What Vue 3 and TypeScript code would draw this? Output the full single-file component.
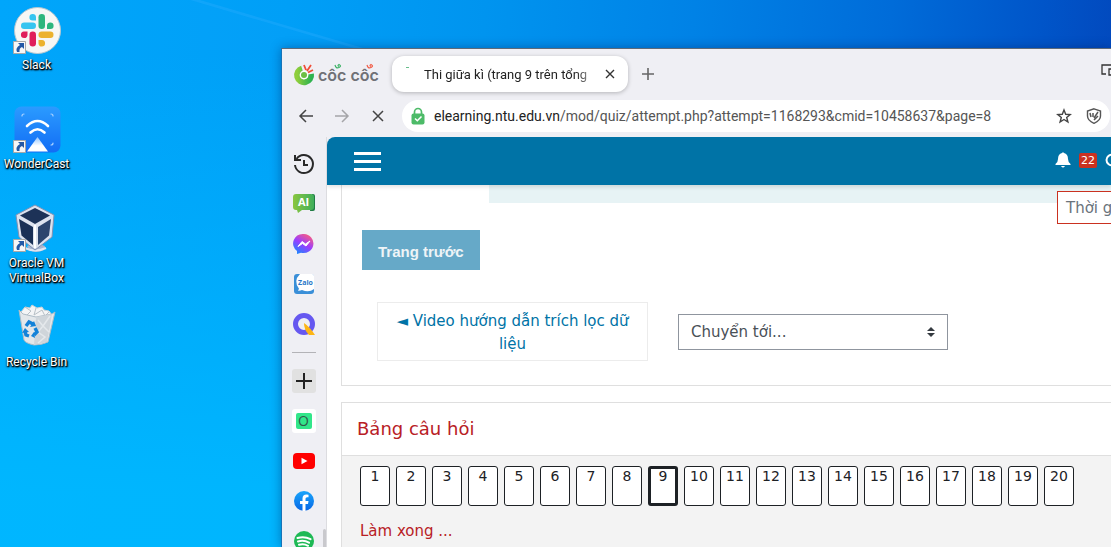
<script setup lang="ts">
import { ref } from 'vue'

interface Shortcut {
  id: string
  label: string
  linked: boolean
}

const shortcuts: Shortcut[] = [
  { id: 'slack', label: 'Slack', linked: true },
  { id: 'cast', label: 'WonderCast', linked: true },
  { id: 'vbox', label: 'Oracle VM VirtualBox', linked: true },
  { id: 'bin', label: 'Recycle Bin', linked: false },
]

const questions: number[] = Array.from({ length: 20 }, (_, i) => i + 1)
const current = ref(9)
const address = ref('/mod/quiz/attempt.php?attempt=1168293&cmid=10458637&page=8')
</script>

<template>
  <div class="desktop">
    <svg class="beam" viewBox="0 0 190 50" width="190" height="50" aria-hidden="true">
      <path d="M0 0h10L180 50h-10z" fill="#35b0ff" fill-opacity=".3" />
      <path d="M0 0 170 50H0z" fill="#35b0ff" fill-opacity=".06" />
    </svg>
    <ul class="shortcuts">
      <li v-for="s in shortcuts" :key="s.id" class="shortcut">
        <span class="picture">
          <svg v-if="s.id === 'slack'" viewBox="0 0 48 48" width="48" height="48" aria-hidden="true">
            <circle cx="24.500" cy="24.500" r="23" fill="#f7f7f5" stroke="#b9c7cf" />
            <g fill="#36c5f0"><rect x="8" y="16.500" width="15" height="6.500" rx="3.200" /><path d="M23 14.500h-3.500a3.300 3.300 0 1 1 3.500-3.500z" /></g>
            <g fill="#2eb67d"><rect x="25.500" y="8" width="6.500" height="15" rx="3.200" /><path d="M34 23V19.500a3.300 3.300 0 1 1 3.500 3.500z" /></g>
            <g fill="#ecb22e"><rect x="25.500" y="25.500" width="15" height="6.500" rx="3.200" /><path d="M25.500 34H29a3.300 3.300 0 1 1-3.500 3.500z" /></g>
            <g fill="#e01e5a"><rect x="16.500" y="25.500" width="6.500" height="15" rx="3.200" /><path d="M14.500 25.500V29A3.300 3.300 0 1 1 11 25.500z" /></g>
          </svg>
          <svg v-else-if="s.id === 'cast'" viewBox="0 0 48 48" width="48" height="48" aria-hidden="true">
            <defs>
              <linearGradient id="castBg" x1="0" y1="0" x2="0" y2="1"><stop offset="0" stop-color="#2b9bff" /><stop offset="1" stop-color="#126df5" /></linearGradient>
              <linearGradient id="castBeam" x1="0" y1="0" x2="0" y2="1"><stop offset="0" stop-color="#8fc4ff" /><stop offset=".6" stop-color="#fff" /></linearGradient>
            </defs>
            <rect x="1.500" y="1.500" width="46" height="46" rx="7" fill="url(#castBg)" />
            <g fill="none" stroke="#fff" stroke-linecap="round">
              <path d="M14 21q10.500-10 21 0M17.500 27.500q7-6.500 14 0" stroke-width="2.600" />
              <path d="M9 11q0-2 2-2M38 9q2 0 2 2M40 38q0 2-2 2" stroke="#a9d2ff" stroke-width="1.200" />
            </g>
            <path d="M24.500 32 35 46.500H14z" fill="url(#castBeam)" />
          </svg>
          <svg v-else-if="s.id === 'vbox'" viewBox="0 0 48 48" width="48" height="48" aria-hidden="true">
            <path d="M14 42q8-5 18 0l-1 4q-8 4-15 0z" fill="#a9b5ce" />
            <path d="M12 44q10 5 21 0" fill="none" stroke="#dfe5f1" stroke-width="2" />
            <path d="M22 1 41 11 39 33 22 46 6 33 3 11z" fill="#dde2ee" stroke="#8191b3" />
            <path d="M22 4 37 11.500 22 20 7 11.500z" fill="#1d3257" />
            <path d="M6 15 20 23V41L8.500 31.500z" fill="#1a2f55" />
            <path d="M38 15 25 23V41L36 31.500z" fill="#2c446d" />
            <path d="M22 21V44" stroke="#fff" stroke-width="2" />
          </svg>
          <svg v-else viewBox="0 0 48 48" width="48" height="48" aria-hidden="true">
            <path d="m8 9 4-5 5 1 2-3 5 3 5-1 2 3 5 1 3 4-3 6H11z" fill="#f4f5f6" stroke="#c9d0d5" />
            <path d="m12 4 6 4-4 4m9-7-2 7 8-5 3 6 4-4" fill="none" stroke="#b8c0c6" />
            <path d="M6 7 11 37q1 3 10 5 8 0 14-3l7-30-3 2-16 3-13-3z" fill="#e3e7ea" stroke="#aebcc6" />
            <path d="m23 14 16-3-5 28-13 3z" fill="#cfd5da" />
            <path d="m25 17 5 6-5 6 7 5-7 6m12-27-7 10 6 6" fill="none" stroke="#e4e8eb" stroke-width="1.500" />
            <g fill="none" stroke="#1382d8" stroke-width="3.400"><path d="m13 23 3-4 4 2M22 25l2 4-3 3M16 33l-3-1-1-4" /></g>
            <g fill="#1382d8"><path d="m17 24 6-1-2-5zM22 35l-4-2 3-4zM9 30l3-5 4 4z" /></g>
          </svg>
          <svg v-if="s.linked" class="arrow" viewBox="0 0 13 13" width="13" height="13" aria-hidden="true">
            <path d="M.5.5h12v12H.5z" fill="#f7f7f7" stroke="#a8a8a8" />
            <path d="M5 2h6v6L9 6Q6 7 6.500 11H4Q2 7 7 4z" fill="#2458a5" />
          </svg>
        </span>
        <span class="caption">{{ s.label }}</span>
      </li>
    </ul>

    <main class="browser">
      <header class="tabs">
        <svg class="brand" viewBox="0 0 90 28" width="90" height="28" role="img" aria-label="Cốc Cốc">
          <defs><linearGradient id="brandRing"><stop offset="0" stop-color="#8fce3c" /><stop offset="1" stop-color="#2eb24f" /></linearGradient></defs>
          <path d="M10 8.500A7 7 0 1 0 19 14" fill="none" stroke="url(#brandRing)" stroke-width="6" />
          <circle cx="12" cy="15" r="4.400" fill="#fff" />
          <circle cx="12" cy="15" r="3" fill="#6cbf45" />
          <path d="M12 5l2 5M19 5l-4 6M21 10l-5 2.500" stroke="#f04e37" stroke-width="1.800" />
          <text x="26" y="21" class="brand-name">côc côc</text>
          <path d="M43 5q1 4 4 2.500t0-3q-2 1 0 2" fill="none" stroke="#3bb265" stroke-width="1.200" />
          <path d="M75 5q1 4 4 2.500t0-3q-2 1 0 2" fill="none" stroke="#f15b45" stroke-width="1.200" />
        </svg>
        <div class="tab">
          <span class="spinner"></span>
          <span class="tab-title">Thi giữa kì (trang 9 trên tổng</span>
          <button class="plain" type="button" aria-label="Close tab">
            <svg viewBox="0 0 16 16" width="16" height="16"><path d="m4 4 8 8m0-8-8 8" stroke="#333" stroke-width="1.400" /></svg>
          </button>
        </div>
        <button class="plain new-tab" type="button" aria-label="New tab">
          <svg viewBox="0 0 16 16" width="16" height="16"><path d="M8 2v12M2 8h12" stroke="#666" stroke-width="1.600" /></svg>
        </button>
        <button class="plain devices" type="button" aria-label="Devices">
          <svg viewBox="0 0 16 16" width="16" height="16" fill="none" stroke="#333" stroke-width="1.300"><path d="M6 12H2V3h12M9 13V7h5v6z" /></svg>
        </button>
      </header>

      <nav class="toolbar" aria-label="Navigation">
        <button class="plain" type="button" aria-label="Back">
          <svg viewBox="0 0 16 16" width="16" height="16" fill="none" stroke="#444" stroke-width="1.500"><path d="M15 8H2m6-6L2 8l6 6" /></svg>
        </button>
        <button class="plain" type="button" aria-label="Forward">
          <svg viewBox="0 0 16 16" width="16" height="16" fill="none" stroke="#a5a5a8" stroke-width="1.500"><path d="M1 8h13M8 2l6 6-6 6" /></svg>
        </button>
        <button class="plain" type="button" aria-label="Stop">
          <svg viewBox="0 0 16 16" width="16" height="16"><path d="m3 3 10 10m0-10L3 13" stroke="#444" stroke-width="1.500" /></svg>
        </button>
        <div class="address">
          <svg viewBox="0 0 16 18" width="16" height="18" aria-hidden="true">
            <path d="M4.500 8V5a3.500 3.500 0 0 1 7 0v3" fill="none" stroke="#4dbb68" stroke-width="1.700" />
            <rect x="1.500" y="6.500" width="13" height="11" rx="2" fill="#4dbb68" />
            <path d="m5 11.500 2.300 2.300L11.500 9.500" fill="none" stroke="#fff" stroke-width="1.500" />
          </svg>
          <span class="url"><b>elearning.ntu.edu.vn</b>{{ address }}</span>
          <button class="plain" type="button" aria-label="Bookmark">
            <svg viewBox="0 0 16 16" width="16" height="16"><path d="m8 2 1.700 4.300 4.500.3-3.500 2.900 1.200 4.500L8 11.500 4.100 14l1.200-4.500-3.500-2.900 4.500-.3z" fill="none" stroke="#444" stroke-width="1.400" /></svg>
          </button>
          <button class="plain" type="button" aria-label="Shield">
            <svg viewBox="0 0 16 16" width="16" height="16" fill="none" stroke="#555"><path d="M8 .8 14.500 3v5q0 4.500-6.500 7.300Q1.500 12.500 1.500 8V3z" stroke-width="1.400" /><path d="m4 5 1 4M7 5v4m5-5-4 6m4-2-4 4" stroke-width="1.500" /></svg>
          </button>
        </div>
      </nav>

      <div class="body">
        <aside class="rail">
          <button class="plain" type="button" aria-label="History">
            <svg viewBox="0 0 24 24" width="24" height="24" fill="none" stroke="#292929" stroke-width="2"><path d="M4.500 7A9 9 0 1 1 3 13M3 3v5h6M12 8v5h4" /></svg>
          </button>
          <button class="plain" type="button" aria-label="AI chat">
            <svg viewBox="0 0 24 24" width="24" height="24">
              <defs><linearGradient id="aiBg"><stop offset="0" stop-color="#8ac63f" /><stop offset="1" stop-color="#3fae5b" /></linearGradient></defs>
              <path d="M20 2h1q2 0 2 2v13q0 2-2 2h-3z" fill="#217c45" />
              <path d="M4 2h15q3 0 3 3v10q0 3-3 3h-9l-4 3-1-3H4q-3 0-3-3V5q0-3 3-3z" fill="url(#aiBg)" />
              <text x="11.500" y="14" text-anchor="middle" class="ai">AI</text>
            </svg>
          </button>
          <button class="plain" type="button" aria-label="Messenger">
            <svg viewBox="0 0 24 24" width="24" height="24">
              <defs><linearGradient id="msg" x1=".2" y1="1" x2=".8" y2="0"><stop offset="0" stop-color="#168aff" /><stop offset=".5" stop-color="#9b3dff" /><stop offset="1" stop-color="#ff5f78" /></linearGradient></defs>
              <path d="M12 2a10 9.500 0 1 1-3 18.700L5 22v-3A10 9.500 0 0 1 12 2z" fill="url(#msg)" />
              <path d="m6 14.500 4-5 3.500 2.500L18 9l-4 5-3.500-2.500z" fill="#fff" stroke="#fff" stroke-linejoin="round" />
            </svg>
          </button>
          <button class="plain" type="button" aria-label="Zalo chat">
            <svg viewBox="0 0 24 24" width="24" height="24">
              <rect x="2" y="2" width="20" height="20" rx="3" fill="#3a8fd8" />
              <path d="M8 2h12q2 0 2 2v13q-5 4-12 1-2 1-4 .7l1-2Q1 9 8 2z" fill="#fff" />
              <text x="13.500" y="13" text-anchor="middle" class="zalo">Zalo</text>
            </svg>
          </button>
          <button class="plain" type="button" aria-label="Q">
            <svg viewBox="0 0 24 24" width="24" height="24"><circle cx="12" cy="12" r="8.500" fill="none" stroke="#6658f0" stroke-width="5" /><path d="M12 11q6 4 11 12h-6q-5-5-5-12z" fill="#fdb515" /></svg>
          </button>
          <hr class="rule" />
          <button class="plain add" type="button" aria-label="Add">
            <svg viewBox="0 0 24 24" width="24" height="24"><path d="M12 4v16M4 12h16" stroke="#222" stroke-width="2" /></svg>
          </button>
          <button class="plain app" type="button"><span>O</span></button>
          <button class="plain" type="button" aria-label="YouTube">
            <svg viewBox="0 0 24 24" width="24" height="24"><rect x="1" y="4" width="22" height="16" rx="4" fill="#f00" /><path d="m9.500 8.700 6 3.300-6 3.300z" fill="#fff" /></svg>
          </button>
          <button class="plain" type="button" aria-label="Facebook">
            <svg viewBox="0 0 24 24" width="24" height="24">
              <defs><linearGradient id="fb" x1="0" y1="0" x2="0" y2="1"><stop offset="0" stop-color="#19a5fb" /><stop offset="1" stop-color="#0866e5" /></linearGradient></defs>
              <circle cx="12" cy="12" r="10" fill="url(#fb)" />
              <path d="M10.500 22v-7H8v-3h2.500V9.500q0-4 4-4l2 .2v2.600h-1.400q-1.600 0-1.600 1.500V12h3l-.5 3h-2.500v7z" fill="#fff" />
            </svg>
          </button>
          <button class="plain" type="button" aria-label="Spotify">
            <svg viewBox="0 0 24 24" width="24" height="24"><circle cx="12" cy="12" r="10" fill="#1eb955" /><path d="M5.500 9q7-2 13 1.200M6 12.500q6-1.700 11 1.200M7 15.800q5-1.300 9 1" fill="none" stroke="#fff" stroke-width="2" stroke-linecap="round" /></svg>
          </button>
          <span class="thumb"></span>
        </aside>

        <section class="site">
          <header class="navbar">
            <button class="plain menu" type="button" aria-label="Menu"><i></i><i></i><i></i></button>
            <div class="alerts">
              <svg viewBox="0 0 16 16" width="16" height="16" aria-hidden="true"><path d="M7 1q1-1.500 2 0 4 1 4 6 0 3 2.500 5v1H.5v-1Q3 10 3 7q0-5 4-6zM6 14h4q-2 3-4 0z" fill="#fff" /></svg>
              <span class="count">22</span>
              <svg class="chat" viewBox="0 0 16 16" width="16" height="16" aria-hidden="true"><ellipse cx="8" cy="8" rx="6.500" ry="5.500" fill="none" stroke="#fff" stroke-width="2" /></svg>
            </div>
          </header>

          <div class="page">
            <div class="timer">Thời g</div>
            <article class="card attempt">
              <div class="answer"></div>
              <button class="previous" type="button">Trang trước</button>
              <div class="jump">
                <a class="activity" href="#video">◄ Video hướng dẫn trích lọc dữ liệu</a>
                <div class="picker">
                  <select aria-label="Chuyển tới"><option>Chuyển tới...</option></select>
                  <svg viewBox="0 0 8 10" width="8" height="10" aria-hidden="true"><path d="M4 0 8 4H0zM0 6h8l-4 4z" fill="#343a40" /></svg>
                </div>
              </div>
            </article>

            <article class="card map">
              <h2>Bảng câu hỏi</h2>
              <div class="map-body">
                <div class="numbers">
                  <a v-for="n in questions" :key="n" href="#question" :class="{ active: n === current }" @click.prevent="current = n">{{ n }}</a>
                </div>
                <a class="finish" href="#finish">Làm xong ...</a>
              </div>
            </article>
          </div>
        </section>
      </div>
    </main>
  </div>
</template>

<style>
html,
body {
  margin: 0;
  overflow: hidden;
}
</style>

<style scoped>
* {
  box-sizing: border-box;
}
.desktop {
  position: relative;
  height: 100vh;
  overflow: hidden;
  background:
    linear-gradient(to bottom, rgba(0, 184, 255, 0) 10%, rgba(0, 184, 255, 0.9) 90%),
    linear-gradient(95deg, #00a6fb 0%, #009ff7 25%, #0094ef 42%, #0082e6 60%, #006cd9 77%, #0055c9 90%, #0343b8 100%);
  font-family: Roboto, "Noto Sans", sans-serif;
}
.beam {
  position: absolute;
  top: 0;
  left: 190px;
}
.shortcuts {
  display: flex;
  flex-direction: column;
  width: 73px;
  margin: 0;
  padding: 6px 0 0;
  list-style: none;
}
.shortcut {
  display: flex;
  flex-direction: column;
  align-items: center;
  gap: 4px;
  height: 99px;
}
.picture {
  position: relative;
  height: 48px;
}
.picture svg {
  display: block;
}
.picture .arrow {
  position: absolute;
  left: 0;
  bottom: 0;
}
.caption {
  padding: 0 4px;
  color: #fff;
  font-size: 12px;
  line-height: 15px;
  text-align: center;
  text-shadow: 1px 1px 2px #000, 0 1px 2px #000, 1px 1px 1px #000;
}
.browser {
  position: absolute;
  top: 48px;
  left: 281px;
  right: 0;
  bottom: 0;
  display: flex;
  flex-direction: column;
  overflow: hidden;
  border-top: 1px solid #5f6a78;
  border-left: 1px solid #1874b8;
  background: #efeff4;
  box-shadow: 0 0 10px rgba(0, 30, 90, 0.4);
}
.plain {
  display: block;
  flex: none;
  padding: 0;
  border: 0;
  background: none;
}
.plain svg,
.address svg {
  display: block;
  flex: none;
}
.tabs {
  display: flex;
  align-items: center;
  height: 50px;
  flex: none;
  margin-bottom: 1px;
  padding-left: 10px;
}
.brand {
  flex: none;
  margin-right: 10px;
}
.brand-name {
  fill: #707176;
  font: 600 16px Inter, sans-serif;
}
.tab {
  display: flex;
  align-items: center;
  width: 236px;
  height: 36px;
  padding: 0 10px 0 14px;
  border-radius: 12px;
  background: #fff;
  box-shadow: 0 1px 4px rgba(0, 0, 0, 0.25);
}
.spinner {
  align-self: flex-start;
  width: 3px;
  height: 1px;
  margin: 11px 15px 0 0;
  background: #67bd8b;
}
.tab-title {
  flex: 1;
  overflow: hidden;
  color: #222;
  font-size: 13px;
  white-space: nowrap;
  mask-image: linear-gradient(to right, #000 85%, transparent);
}
.new-tab {
  margin-left: 12px;
}
.devices {
  margin: 0 -5px 8px auto;
}
.toolbar {
  display: flex;
  align-items: center;
  gap: 20px;
  height: 32px;
  margin-bottom: 5px;
  flex: none;
  padding: 0 1px 0 16px;
}
.address {
  display: flex;
  flex: 1;
  align-items: center;
  gap: 14px;
  min-width: 0;
  height: 32px;
  margin-left: -4px;
  padding: 0 8px;
  border-radius: 16px;
  background: #fff;
}
.url {
  flex: 1;
  margin-left: -6px;
  overflow: hidden;
  color: #555;
  font-size: 14px;
  white-space: nowrap;
}
.url b {
  color: #222;
  font-weight: 400;
}
.body {
  display: flex;
  flex: 1;
  min-height: 0;
}
.rail {
  position: relative;
  display: flex;
  flex: none;
  flex-direction: column;
  align-items: center;
  gap: 16px;
  width: 45px;
  padding: 15px 1px 0 0;
  border-right: 1px solid #dcdce0;
}
.rule {
  flex: none;
  width: 24px;
  height: 1px;
  margin: 0;
  border: 0;
  background: #b3b3b7;
}
.add {
  border-radius: 3px;
  background: #e1e1e1;
}
.app {
  width: 24px;
  height: 24px;
  padding: 4px;
  border-radius: 3px;
  background: #fff;
}
.app span {
  display: block;
  border-radius: 2px;
  background: #32e68a;
  color: #33584a;
  font: 14px/16px "Open Sans", sans-serif;
}
.ai {
  fill: #fff;
  font: 700 11px "Open Sans", sans-serif;
}
.zalo {
  fill: #2878c8;
  font: 700 7px "Open Sans", sans-serif;
}
.thumb {
  position: absolute;
  right: 0;
  bottom: 0;
  width: 3px;
  height: 18px;
  border-radius: 2px 2px 0 0;
  background: #c9c9cd;
}
.site {
  display: flex;
  flex: 1;
  flex-direction: column;
  min-width: 0;
  overflow: hidden;
  border-top-left-radius: 8px;
  background: #fff;
  color: #495057;
  font: 15px/23px "DejaVu Sans", Verdana, sans-serif;
}
.navbar {
  z-index: 1;
  display: flex;
  flex: none;
  align-items: center;
  justify-content: space-between;
  height: 48px;
  padding-left: 27px;
  background: #0073a6;
  box-shadow: 0 2px 4px rgba(0, 0, 0, 0.12);
}
.menu {
  display: flex;
  flex-direction: column;
  gap: 5px;
  width: 27px;
}
.menu i {
  height: 3px;
  background: #fff;
}
.alerts {
  display: flex;
  align-items: center;
  gap: 8px;
  margin: 0 -10px 2px 0;
}
.count {
  padding: 0 2px;
  border-radius: 2px;
  background: #ca3120;
  color: #fff;
  font-size: 11px;
  line-height: 15px;
}
.page {
  position: relative;
  flex: 1;
  padding-left: 14px;
}
.timer {
  position: absolute;
  top: 6px;
  right: -40px;
  width: 94px;
  padding: 5px 8px 3px;
  border: 1px solid #ca3120;
  background: #fff;
  color: #6a737b;
  white-space: nowrap;
}
.card {
  border: 1px solid #dfdfdf;
  border-right: 0;
}
.attempt {
  height: 201px;
  margin-bottom: 16px;
  padding-left: 20px;
  border-top: 0;
}
.answer {
  height: 18px;
  margin: 0 0 27px 127px;
  background: #e7f3f5;
}
.previous {
  display: block;
  height: 40px;
  padding: 3px 16px 1px;
  border: 0;
  background: #66a9c8;
  color: #eef4f7;
  font: 700 15px "Liberation Sans", Arial, sans-serif;
}
.jump {
  display: flex;
  align-items: center;
  gap: 30px;
  margin: 32px 0 0 15px;
}
.activity {
  width: 271px;
  padding: 7px 16px 4px;
  border: 1px solid #ececec;
  color: #0073a6;
  text-align: center;
  text-decoration: none;
}
.picker {
  position: relative;
  width: 270px;
}
.picker select {
  display: block;
  width: 100%;
  height: 36px;
  padding: 2px 12px 0;
  appearance: none;
  border: 1px solid #8f959e;
  border-radius: 0;
  background: #fff;
  color: #495057;
  font: inherit;
}
.picker svg {
  position: absolute;
  top: 13px;
  right: 13px;
}
h2 {
  margin: 0;
  padding: 14px 15px;
  border-bottom: 1px solid #dfdfdf;
  color: #b82025;
  font-size: 18px;
  font-weight: 400;
  line-height: 24px;
}
.map-body {
  height: 120px;
  padding: 10px 18px;
  background: #f3f3f3;
}
.numbers {
  display: flex;
  gap: 6px;
  margin-bottom: 14px;
}
.numbers a {
  width: 30px;
  height: 40px;
  flex: none;
  border: 1px solid #1d2125;
  border-radius: 3px;
  background: #fff;
  color: #1d2125;
  font-size: 14px;
  line-height: 18px;
  text-align: center;
  text-decoration: none;
}
.numbers .active {
  border-width: 3px;
  line-height: 14px;
}
.finish {
  color: #b82025;
  text-decoration: none;
}
</style>
